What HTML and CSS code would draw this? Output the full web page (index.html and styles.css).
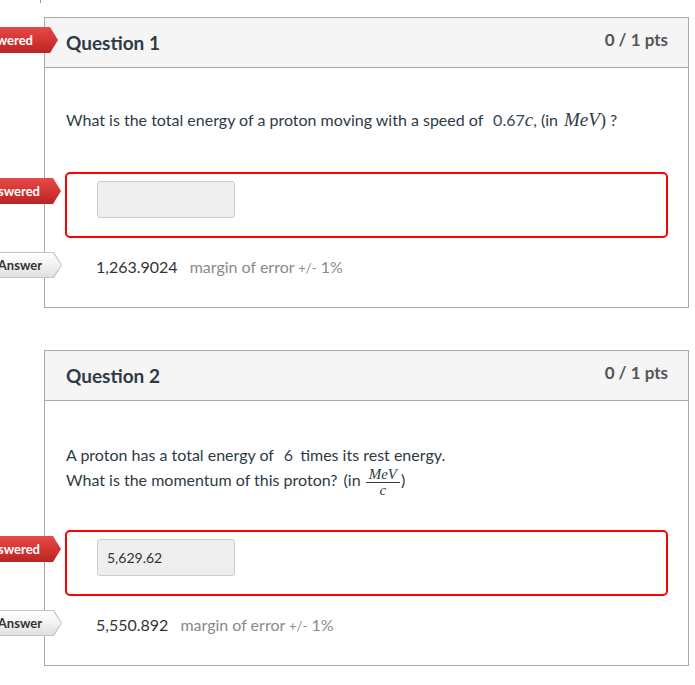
FILE: index.html
```html
<!DOCTYPE html>
<html>
<head>
<meta charset="utf-8">
<link rel="stylesheet" href="styles.css">
</head>
<body>
<span class="top-mark"></span>
<div class="quiz">
  <div class="question">
    <div class="tag tag-red tag-head"><span>Unanswered</span></div>
    <div class="q-header">
      <span class="q-name">Question 1</span>
      <span class="q-pts">0 / 1 pts</span>
    </div>
    <div class="q-body">
      <p class="q-text one-line">What is the total energy of a proton moving with a speed of <span class="num sp-l">0.67</span><span class="mi">c</span>, (in <span class="mi mev">MeV</span><span class="mo">)</span> ?</p>
      <div class="answer-row">
        <div class="tag tag-red tag-user"><span>You Answered</span></div>
        <div class="answer-box"><div class="answer-input"></div></div>
      </div>
      <div class="correct-row">
        <div class="tag tag-gray"><span class="tag-inner">Correct Answer</span></div>
        <span class="val">1,263.9024</span>
        <span class="margin">margin of error <span class="pm">+/-</span> 1%</span>
      </div>
    </div>
  </div>

  <div class="question">
    <div class="q-header">
      <span class="q-name">Question 2</span>
      <span class="q-pts">0 / 1 pts</span>
    </div>
    <div class="q-body">
      <p class="q-text two-line">A proton has a total energy of <span class="num sp-six">6</span> times its rest energy.<br>What is the momentum of this proton? <span class="sp-in">(in</span> <span class="frac"><span class="fn mi">MeV</span><span class="fd mi">c</span></span><span class="paren">)</span></p>
      <div class="answer-row">
        <div class="tag tag-red tag-user"><span>You Answered</span></div>
        <div class="answer-box"><div class="answer-input">5,629.62</div></div>
      </div>
      <div class="correct-row">
        <div class="tag tag-gray"><span class="tag-inner">Correct Answer</span></div>
        <span class="val">5,550.892</span>
        <span class="margin">margin of error <span class="pm">+/-</span> 1%</span>
      </div>
    </div>
  </div>
</div>
</body>
</html>
```

FILE: styles.css
```css
html, body {
  margin: 0;
  padding: 0;
  background: #ffffff;
}

body {
  font-family: Lato, "Noto Sans", "Liberation Sans", sans-serif;
  color: #2d3b45;
  overflow: hidden;
}

.top-mark {
  position: absolute;
  left: 40px;
  top: 0;
  width: 1px;
  height: 3px;
  background: #6a9fd8;
}

.quiz {
  padding: 17px 0 0 44px;
}

.question {
  position: relative;
  width: 645px;
  box-sizing: border-box;
  border: 1px solid #aaaaaa;
  margin-bottom: 42px;
}

.q-header {
  height: 50px;
  box-sizing: border-box;
  display: flex;
  align-items: center;
  justify-content: space-between;
  padding: 0 20px 0 21px;
  background: #f5f5f5;
  border-bottom: 1px solid #aaaaaa;
}

.q-name {
  font-size: 19px;
  font-weight: 700;
  color: #2d3b45;
  line-height: 22px;
}

.q-pts {
  font-size: 17px;
  font-weight: 700;
  color: #555555;
  line-height: 20px;
  margin-bottom: 6px;
}

.q-body {
  padding: 42px 20px 27px 20px;
}

.q-text {
  margin: 0 0 0 1px;
  font-size: 16px;
  line-height: 20px;
  color: #2d3b45;
}

.q-text.one-line {
  margin-bottom: 42px;
}

.q-body .two-line {
  line-height: 25px;
  margin-top: -1px;
  margin-bottom: 35px;
}

.num {
  font-family: Lato, "Noto Sans", sans-serif;
  color: #3a4650;
  font-size: 16px;
}

.sp-l { margin-left: 6px; }
.sp-six { margin: 0 3px 0 6px; }
.sp-in { margin-left: 2px; }

.mi {
  font-family: "Liberation Serif", "DejaVu Serif", serif;
  font-style: italic;
  font-size: 19px;
}

.mev { margin-left: 2px; }

.mo {
  font-family: "Liberation Serif", serif;
  font-size: 18px;
}

.frac {
  display: inline-flex;
  flex-direction: column;
  align-items: center;
  vertical-align: 7px;
  margin: 0 1px;
}

.fn {
  font-size: 15px;
  line-height: 11px;
  padding: 0 3px 2px;
  border-bottom: 1px solid #2d3b45;
}

.fd {
  font-size: 15px;
  line-height: 10px;
  padding-top: 2px;
}

.paren {
  font-size: 16px;
}

.answer-row {
  position: relative;
}

.answer-box {
  border: 2px solid #ff0000;
  border-radius: 5px;
  padding: 7px 30px 18px 30px;
}

.answer-input {
  width: 138px;
  height: 37px;
  box-sizing: border-box;
  background: #eeeeee;
  border: 1px solid #cccccc;
  border-radius: 3px;
  padding: 0 9px;
  font-size: 14px;
  line-height: 35px;
  color: #333333;
}

.correct-row {
  position: relative;
  margin-top: 14px;
  height: 28px;
  display: flex;
  align-items: center;
  padding-left: 31px;
  font-size: 16px;
}

.val {
  color: #333333;
}

.margin {
  margin-left: 12px;
  color: #8a8a8a;
}

.pm {
  font-size: 13px;
}

/* tags */
.tag {
  position: absolute;
  height: 26px;
  box-sizing: border-box;
  font-size: 13px;
  font-weight: 700;
  white-space: nowrap;
  clip-path: polygon(0 0, calc(100% - 8px) 0, 100% 50%, calc(100% - 8px) 100%, 0 100%);
}

.tag-red {
  background: linear-gradient(to bottom, #e44a48 0%, #d43634 50%, #b82424 100%);
  color: #ffffff;
  line-height: 26px;
  padding: 0 21px 0 12px;
}

.tag-head {
  top: 9px;
  right: calc(100% - 13px);
  padding-right: 25px;
}

.tag-user {
  top: 6px;
  right: calc(100% + 4px);
}

.tag-gray {
  top: 0;
  right: calc(100% + 3px);
  background: #c4c4c4;
  padding: 1px;
  color: #333333;
}

.tag-inner {
  display: block;
  height: 24px;
  line-height: 24px;
  padding: 0 19px 0 12px;
  background: linear-gradient(to bottom, #ffffff 0%, #f2f2f2 50%, #e0e0e0 100%);
  clip-path: polygon(0 0, calc(100% - 8px) 0, 100% 50%, calc(100% - 8px) 100%, 0 100%);
}
```
